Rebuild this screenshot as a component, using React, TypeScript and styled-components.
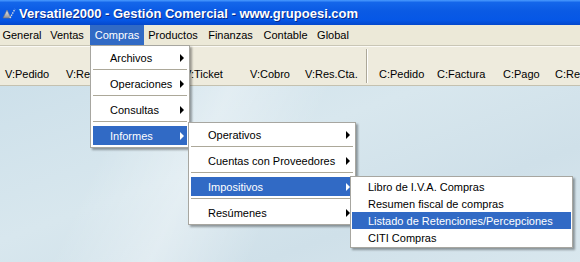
import React from 'react'
import styled, { createGlobalStyle } from 'styled-components'

const GlobalStyle = createGlobalStyle`
    html, body {
        margin: 0;
        padding: 0;
    }
    body {
        font-family: 'Liberation Sans', Arial, sans-serif;
        font-size: 11px;
        color: #000;
    }
    * {
        box-sizing: border-box;
    }
`

const Window = styled.div`
    width: 580px;
    height: 262px;
    overflow: hidden;
    display: flex;
    flex-direction: column;
`

const TitleBar = styled.div`
    height: 25px;
    flex-shrink: 0;
    display: flex;
    align-items: center;
    gap: 3px;
    padding-left: 2px;
    background: linear-gradient(to bottom, #4a9bff 0%, #1466ea 10%, #0a5ae4 45%, #0657e6 80%, #0448cc 100%);
`

const TitleText = styled.span`
    font-weight: bold;
    font-size: 13px;
    color: #fff;
    text-shadow: 1px 1px 0 #0a2a86;
    white-space: nowrap;
    padding-top: 1px;
`

const MenuBar = styled.div`
    height: 20px;
    flex-shrink: 0;
    display: flex;
    background: #ece9d8;
    position: relative;
    z-index: 10;
`

const MenuBarItem = styled.div<{ $w: number; $active?: boolean }>`
    position: relative;
    width: ${p => p.$w}px;
    display: flex;
    align-items: center;
    justify-content: center;
    white-space: nowrap;
    background: ${p => (p.$active ? '#316ac5' : 'transparent')};
    color: ${p => (p.$active ? '#fff' : '#000')};
`

const Toolbar = styled.div`
    height: 41px;
    flex-shrink: 0;
    display: flex;
    align-items: flex-end;
    padding: 0 0 4px 5px;
    background: #eeebdd;
    border-top: 1px solid #c9c6b6;
    box-shadow: inset 0 1px 0 #fbfaf5;
    border-bottom: 1px solid #c4c1b0;
    overflow: hidden;
`

const ToolButton = styled.div<{ $w: number }>`
    width: ${p => p.$w}px;
    flex-shrink: 0;
    white-space: nowrap;
    line-height: 13px;
`

const ToolSeparator = styled.div`
    align-self: stretch;
    width: 2px;
    margin: 3px 11px -2px 0;
    border-left: 1px solid #aca899;
    border-right: 1px solid #fff;
`

const Desktop = styled.div`
    flex: 1;
    background:
        linear-gradient(115deg, rgba(255, 255, 255, 0) 20%, rgba(255, 255, 255, 0.35) 35%, rgba(255, 255, 255, 0) 50%),
        linear-gradient(160deg, #cde0ea 0%, #d8e7ee 40%, #cfe0e9 70%, #d9e7ee 100%);
`

const Menu = styled.div<{ $w: number; $top: string; $left: string; $pad?: number }>`
    position: absolute;
    top: ${p => p.$top};
    left: ${p => p.$left};
    width: ${p => p.$w}px;
    padding: ${p => p.$pad ?? 2}px;
    background: #fff;
    border: 1px solid #a7a6a0;
    box-shadow: 2px 2px 2px rgba(0, 0, 0, 0.35);
    color: #000;
    z-index: 20;
`

const Item = styled.div<{ $h: number; $active?: boolean; $indent?: number }>`
    position: relative;
    height: ${p => p.$h}px;
    display: flex;
    align-items: center;
    justify-content: space-between;
    padding: 0 3px 0 ${p => p.$indent ?? 17}px;
    white-space: nowrap;
    background: ${p => (p.$active ? '#316ac5' : 'transparent')};
    color: ${p => (p.$active ? '#fff' : '#000')};
`

const Arrow = styled.span`
    width: 0;
    height: 0;
    border-left: 4px solid currentColor;
    border-top: 4px solid transparent;
    border-bottom: 4px solid transparent;
`

const Separator = styled.div`
    height: 7px;
    display: flex;
    align-items: center;
    &::after {
        content: '';
        flex: 1;
        height: 2px;
        border-top: 1px solid #aca899;
        border-bottom: 1px solid #fff;
    }
`

const AppIcon = () => (
    <svg width="14" height="14" viewBox="0 0 14 14">
        <defs>
            <linearGradient id="hill" x1="0" y1="0" x2="0" y2="1">
                <stop offset="0" stopColor="#f2f2f2" />
                <stop offset="1" stopColor="#8a8f99" />
            </linearGradient>
        </defs>
        <polygon points="1,12 5,4 9,12" fill="url(#hill)" stroke="#6b6f78" strokeWidth="0.6" />
        <line x1="8" y1="12" x2="13" y2="3" stroke="#d8dce4" strokeWidth="1.4" strokeDasharray="1.5 1" />
    </svg>
)

const vButtons: [string, number][] = [
    ['V:Pedido', 61],
    ['V:Remito', 59],
    ['V:Factura', 59],
    ['V:Ticket', 66],
    ['V:Cobro', 55],
    ['V:Res.Cta.', 61],
]

const cButtons: [string, number][] = [
    ['C:Pedido', 58],
    ['C:Factura', 66],
    ['C:Pago', 52],
    ['C:Remito', 60],
]

const App = () => {
    return (
        <Window>
            <GlobalStyle />
            <TitleBar>
                <AppIcon />
                <TitleText>Versatile2000 - Gestión Comercial - www.grupoesi.com</TitleText>
            </TitleBar>
            <MenuBar>
                <MenuBarItem $w={44}>General</MenuBarItem>
                <MenuBarItem $w={46}>Ventas</MenuBarItem>
                <MenuBarItem $w={54} $active>
                    Compras
                    <Menu $w={100} $top="100%" $left="0">
                        <Item $h={19}>Archivos<Arrow /></Item>
                        <Separator />
                        <Item $h={19}>Operaciones<Arrow /></Item>
                        <Separator />
                        <Item $h={19}>Consultas<Arrow /></Item>
                        <Separator />
                        <Item $h={19} $active>
                            Informes<Arrow />
                            <Menu $w={168} $top="-4px" $left="95px">
                                <Item $h={19}>Operativos<Arrow /></Item>
                                <Separator />
                                <Item $h={19}>Cuentas con Proveedores<Arrow /></Item>
                                <Separator />
                                <Item $h={19} $active>
                                    Impositivos<Arrow />
                                    <Menu $w={223} $top="-1px" $left="159px" $pad={1}>
                                        <Item $h={17} $indent={16}>Libro de I.V.A. Compras</Item>
                                        <Item $h={17} $indent={16}>Resumen fiscal de compras</Item>
                                        <Item $h={17} $indent={16} $active>Listado de Retenciones/Percepciones</Item>
                                        <Item $h={17} $indent={16}>CITI Compras</Item>
                                    </Menu>
                                </Item>
                                <Separator />
                                <Item $h={19}>Resúmenes<Arrow /></Item>
                            </Menu>
                        </Item>
                    </Menu>
                </MenuBarItem>
                <MenuBarItem $w={58}>Productos</MenuBarItem>
                <MenuBarItem $w={57}>Finanzas</MenuBarItem>
                <MenuBarItem $w={53}>Contable</MenuBarItem>
                <MenuBarItem $w={42}>Global</MenuBarItem>
            </MenuBar>
            <Toolbar>
                {vButtons.map(([label, w]) => (
                    <ToolButton key={label} $w={w}>{label}</ToolButton>
                ))}
                <ToolSeparator />
                {cButtons.map(([label, w]) => (
                    <ToolButton key={label} $w={w}>{label}</ToolButton>
                ))}
            </Toolbar>
            <Desktop />
        </Window>
    )
}

export default App
